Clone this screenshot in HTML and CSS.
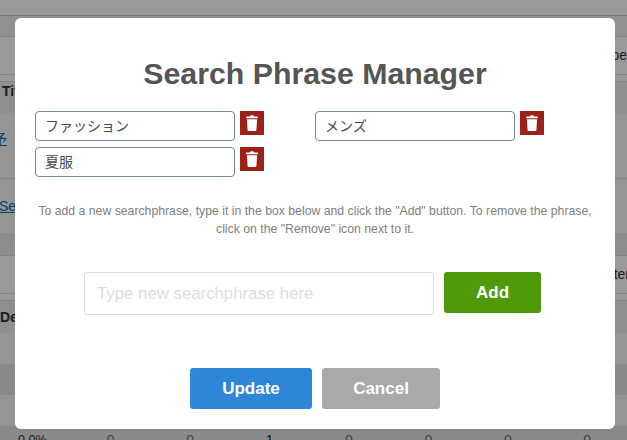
FILE: index.html
```html
<!DOCTYPE html>
<html lang="en">

<head>
  <meta charset="UTF-8" />
  <meta name="viewport" content="width=device-width, initial-scale=1.0" />
  <title>Search Phrase Manager</title>
  <link rel="stylesheet" href="styles.css">
</head>

<body>
  <!-- page behind the dialog -->
  <div class="page">
    <div class="row row-topbar"></div>
    <div class="row row-tabs"></div>
    <div class="row row-plain row-right">pe</div>
    <div class="row row-gap"></div>
    <div class="row row-head"><b>Title</b></div>
    <div class="row row-link"><a href="#">予</a></div>
    <div class="row row-link2"><a href="#">Set</a></div>
    <div class="row row-stripe"></div>
    <div class="row row-plain2 row-right">ter</div>
    <div class="row row-gap"></div>
    <div class="row row-head2"><b>Detail</b></div>
    <div class="row row-light"></div>
    <div class="row row-dark"></div>
    <div class="row row-light2"></div>
    <div class="row row-totals">
      <span class="cell-first">0.0%</span>
      <span>0</span><span>0</span><span class="cell-count">1</span><span>0</span><span>0</span><span>0</span><span>0</span>
    </div>
  </div>

  <div class="overlay"></div>

  <div class="modal">
    <h1 class="modal-title">Search Phrase Manager</h1>

    <ul class="phrase-list">
      <li class="phrase">
        <input class="phrase-input" type="text" value="ファッション" />
        <button class="phrase-remove">
          <svg viewBox="0 0 12 16" width="12" height="16"><path d="M4 1.6 4.6.3h2.8L8 1.6h3.3c.4 0 .7.3.7.7v.9H0v-.9c0-.4.3-.7.7-.7zM.9 4.300h10.200l-.7 10.600c0 .6-.5 1.100-1.100 1.100H2.700c-.6 0-1.100-.5-1.100-1.100z" /></svg>
        </button>
      </li>
      <li class="phrase">
        <input class="phrase-input" type="text" value="メンズ" />
        <button class="phrase-remove">
          <svg viewBox="0 0 12 16" width="12" height="16"><path d="M4 1.6 4.6.3h2.8L8 1.6h3.3c.4 0 .7.3.7.7v.9H0v-.9c0-.4.3-.7.7-.7zM.9 4.300h10.200l-.7 10.600c0 .6-.5 1.100-1.100 1.100H2.700c-.6 0-1.100-.5-1.100-1.100z" /></svg>
        </button>
      </li>
      <li class="phrase">
        <input class="phrase-input" type="text" value="夏服" />
        <button class="phrase-remove">
          <svg viewBox="0 0 12 16" width="12" height="16"><path d="M4 1.6 4.6.3h2.8L8 1.6h3.3c.4 0 .7.3.7.7v.9H0v-.9c0-.4.3-.7.7-.7zM.9 4.300h10.200l-.7 10.600c0 .6-.5 1.100-1.100 1.100H2.700c-.6 0-1.100-.5-1.100-1.100z" /></svg>
        </button>
      </li>
    </ul>

    <p class="modal-help">To add a new searchphrase, type it in the box below and click the "Add" button. To remove the phrase, click on the "Remove" icon next to it.</p>

    <div class="add-row">
      <input class="add-input" type="text" placeholder="Type new searchphrase here" />
      <button class="btn btn-add">Add</button>
    </div>

    <div class="modal-footer">
      <button class="btn btn-update">Update</button>
      <button class="btn btn-cancel">Cancel</button>
    </div>
  </div>
</body>

</html>
```

FILE: styles.css
```css
* {
  box-sizing: border-box;
}

html,
body {
  height: 100%;
}

body {
  margin: 0;
  overflow: hidden;
  background: #fff;
  font-family: "Liberation Sans", "Noto Sans CJK JP", sans-serif;
  color: #333;
}

/* page behind the dialog */
.page {
  height: 440px;
  overflow: hidden;
  font-size: 14px;
}

.row {
  border-bottom: 1px solid #ddd;
  overflow: hidden;
}

.row-right {
  text-align: right;
}

.row-topbar {
  height: 16px;
  border-bottom-color: #c8c8c8;
}

.row-tabs {
  height: 21px;
  background: #f2f2f2;
}

.row-plain {
  height: 38px;
  line-height: 36px;
}

.row-gap {
  height: 7px;
}

.row-head {
  height: 31px;
  background: #eee;
  line-height: 18px;
  padding-left: 2px;
  border: 0;
}

.row-link {
  height: 66px;
  padding-top: 15px;
  background: #f8f8f8;
}

.row-link2 {
  height: 56px;
  padding-top: 19px;
  background: #f8f8f8;
}

.row-link a,
.row-link2 a {
  color: #0a6ea8;
}

.row-link a {
  margin-left: -7px;
}

.row-link2 a {
  margin-left: -1px;
}

.row-stripe {
  height: 21px;
  background: #ececec;
}

.row-plain2 {
  height: 38px;
  line-height: 36px;
  margin-right: -3px;
}

.row-head2 {
  height: 32px;
  background: #eee;
  line-height: 32px;
  border: 0;
}

.row-light {
  height: 31px;
  border: 0;
  background: #f8f8f8;
}

.row-dark {
  height: 31px;
  border: 0;
  background: #e6e6e6;
}

.row-light2 {
  height: 31px;
  border: 0;
  background: #f8f8f8;
}

.row-totals {
  height: 14px;
  background: #e6e6e6;
  border: 0;
  display: flex;
  line-height: 28px;
  color: #777;
}

.row-totals span {
  width: 79.7px;
  text-align: center;
}

.row-totals .cell-count {
  color: #222;
}

.row-totals .cell-first {
  width: 71px;
  padding-left: 18px;
  font-size: 12.5px;
  color: #333;
  text-align: left;
  flex: none;
}

.overlay {
  position: fixed;
  inset: 0;
  background: rgba(0, 0, 0, 0.4);
}

/* dialog */
.modal {
  position: fixed;
  left: 15px;
  top: 18px;
  width: 600px;
  height: 411px;
  padding: 0 20px;
  background: #fff;
  border-radius: 6px;
}

.modal-title {
  margin: 0;
  padding-top: 37px;
  height: 93px;
  font-size: 30.3px;
  line-height: 38px;
  font-weight: bold;
  color: #555;
  text-align: center;
}

.phrase-list {
  margin: 0;
  padding: 0;
  list-style: none;
  display: grid;
  grid-template-columns: 280px 280px;
  row-gap: 6px;
}

.phrase {
  display: flex;
  align-items: flex-start;
  gap: 5px;
}

.phrase-input {
  width: 200px;
  height: 30px;
  padding: 0 9px 3px;
  border: 1px solid #76879b;
  border-radius: 4px;
  font-family: inherit;
  font-size: 14px;
  color: #4a4a4a;
  background: #fff;
}

.phrase-remove {
  width: 24px;
  height: 24px;
  padding: 0;
  border: none;
  background: #9b2119;
  display: flex;
  align-items: center;
  justify-content: center;
}

.phrase-remove svg {
  display: block;
  fill: #fff;
}

.modal-help {
  margin: 25px 0 0;
  font-size: 12.25px;
  line-height: 18px;
  color: #808080;
  text-align: center;
}

.add-row {
  margin-top: 34px;
  padding-left: 49px;
  display: flex;
  align-items: flex-start;
  gap: 10px;
}

.add-input {
  width: 350px;
  height: 43px;
  padding: 0 12px;
  border: 1px solid #ddd;
  border-radius: 3px;
  font-family: inherit;
  font-size: 16.8px;
  color: #444;
}

.add-input::placeholder {
  color: #dedede;
  opacity: 1;
}

.btn {
  height: 41px;
  padding: 1px 0 0;
  border: none;
  border-radius: 3px;
  color: #fff;
  font-family: inherit;
  font-size: 17px;
  font-weight: bold;
}

.btn-add {
  width: 97px;
  background: #4f9a0a;
}

.modal-footer {
  margin-top: 53px;
  display: flex;
  justify-content: center;
  gap: 10px;
}

.btn-update {
  width: 122px;
  background: #2e86d8;
}

.btn-cancel {
  width: 118px;
  background: #a9a9a9;
}
```
